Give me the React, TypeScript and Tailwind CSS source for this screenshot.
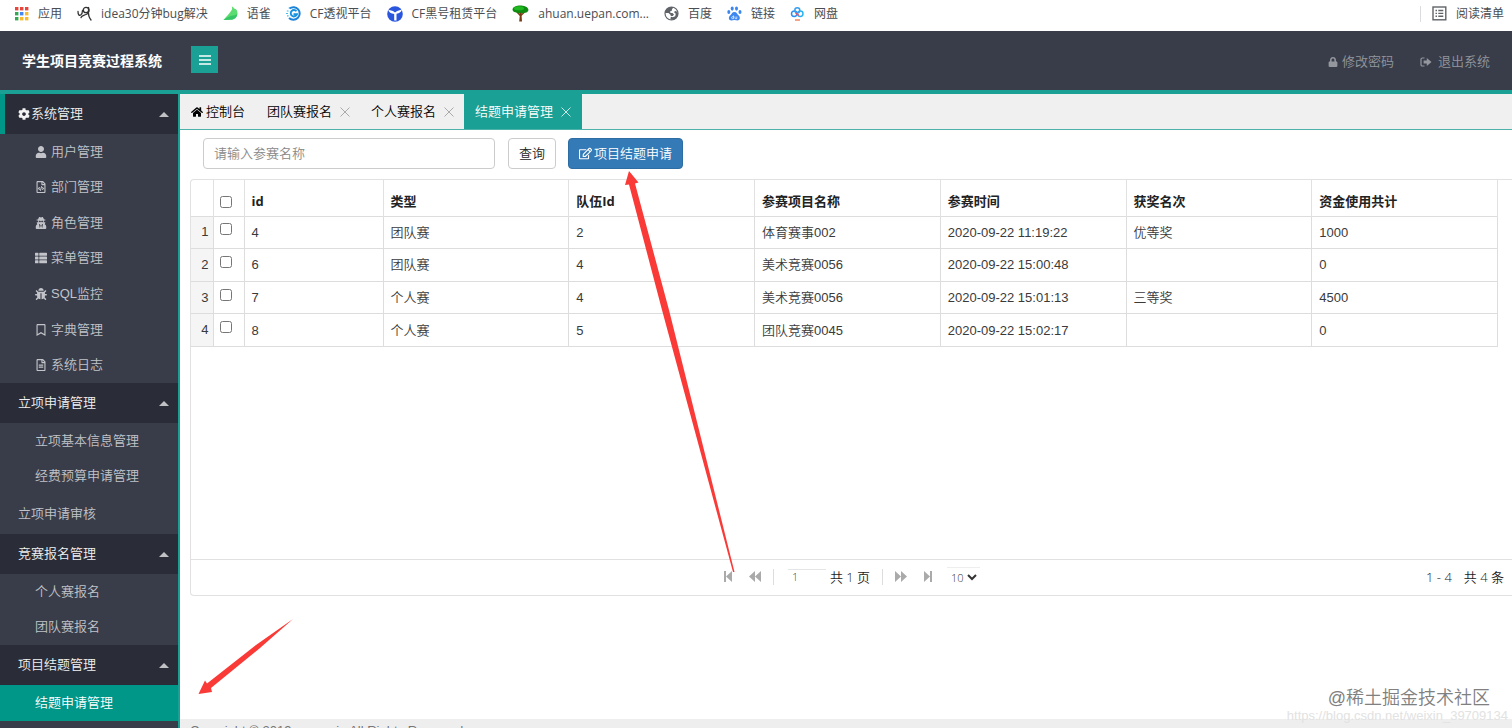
import React, { useState } from 'react';
import {
  FaBug,
  FaCog,
  FaHome,
  FaLock,
  FaRegBookmark,
  FaRegEdit,
  FaRegFileAlt,
  FaRegFileCode,
  FaThList,
  FaUser,
  FaUserSecret,
} from 'react-icons/fa';
import type { IconType } from 'react-icons';

/* ---------- bookmark icons ---------- */

const AppsIcon = () => {
  const colors = ['#e8453c', '#e8453c', '#e8453c', '#34a853', '#4285f4', '#f9bb2d', '#34a853', '#f9bb2d', '#f9bb2d'];
  return (
    <svg width="15" height="15" viewBox="0 0 15 15">
      {colors.map((c, i) => (
        <rect key={i} x={1 + (i % 3) * 5} y={1 + Math.floor(i / 3) * 5} width="3.4" height="3.4" fill={c} />
      ))}
    </svg>
  );
};

const ScriptIcon = () => (
  <svg width="15" height="15" viewBox="0 0 15 15" fill="none" stroke="#333" strokeWidth="1.3" strokeLinecap="round">
    <path d="M1 5.500c0 3 1.200 4.500 2.700 3.500S5.500 6 5.500 4.500" />
    <circle cx="9" cy="4" r="2.700" />
    <path d="M11.500 1.500c1 3 .2 6-2.500 7S4.500 9.500 4 11.500M11.500 5c-.3 3 .5 6.500 2.500 9" />
  </svg>
);

const LeafIcon = () => (
  <svg width="15" height="15" viewBox="0 0 15 15">
    <path d="M8.500.5c1.500.3 2 .8 2.600 2 2.200.3 3 1.500 3.400 4.200 0 4-3 6.800-7 6.800L.5 14C3 11 7 7 9 3.500 9.300 2 9.200 1.200 8.500.5z" fill="#5bdb70" />
    <path d="M.5 14C4 11.500 7 9.800 10 9.500c2 .1 3.500-.7 4.300-2 0 4-3 6.300-7 6.300z" fill="#35c566" />
  </svg>
);

const GIcon = () => (
  <svg width="15" height="15" viewBox="0 0 15 15" fill="none">
    <path d="M3.500 2.500A6.300 6.300 0 1 1 3 12" stroke="#1a82d8" strokeWidth="2" />
    <path d="M10.500 5.300A3.200 3.200 0 1 0 11 8.200H7.500" stroke="#1593e0" strokeWidth="1.900" />
    <path d="M.8 5h1.800M0 7.500h2M1 9.800h1.600M2.600 2h1.600" stroke="#42bdf0" strokeWidth="1.200" />
  </svg>
);

const RentIcon = () => (
  <svg width="16" height="16" viewBox="0 0 16 16">
    <circle cx="8" cy="8" r="7.800" fill="#2a55df" />
    <path d="M1.300 3.800 6 5l2 1.500L10.200 5l4.600-1.500c-.5 2.500-2 3.700-5.300 4.300v6.700H7.200V8C4 7.500 1.800 6.500 1.300 3.800z" fill="#fff" />
  </svg>
);

const TreeIcon = () => (
  <svg width="17" height="17" viewBox="0 0 17 17">
    <path d="M7 7h3l-.4 3.500.4 6H7.200l.6-6z" fill="#7a3b10" />
    <path d="M4.500 6.500 8.200 10.500M13 6.500l-4 4" stroke="#7a3b10" strokeWidth="1.200" />
    <path d="M.5 4.500C1 1.500 4.500.5 8 .5s8 1 8.500 4.500c-.5 2-2.500 3.500-4.500 2.500-1 1.200-2 .5-3 0-1.500 1-3.500 1-4.500 0C2.500 7.500.5 6.500.5 4.500z" fill="#0e8c12" />
    <ellipse cx="7" cy="3.200" rx="5" ry="2" fill="#21b81f" />
  </svg>
);

const GlobeIcon = () => (
  <svg width="15" height="15" viewBox="0 0 15 15">
    <circle cx="7.500" cy="7.500" r="6.500" fill="#fff" stroke="#5f6368" strokeWidth="1.200" />
    <path d="M9.500 1.200C6 .2 1.500 2.500 1 7h3.500l2 1.700.3 1.300h2L10 8.500 8.500 7H6.500L6 5.500l1.800-.8L8 3.200z" fill="#5f6368" />
    <path d="M14 7.500 12.500 5.200 10.800 5l-.6 1.600 1.600 1.200-.6 2.400-2.400 1-1.600-.4-.8 1.200.4 1.700C11 14.500 14 11.500 14 7.500z" fill="#5f6368" />
  </svg>
);

const PawIcon = () => (
  <svg width="15" height="15" viewBox="0 0 15 15" fill="#3b86f0">
    <ellipse cx="1.800" cy="6" rx="1.500" ry="2" />
    <ellipse cx="5.200" cy="2.600" rx="1.500" ry="2.100" />
    <ellipse cx="9.500" cy="2.600" rx="1.500" ry="2.100" />
    <ellipse cx="13" cy="6" rx="1.500" ry="2" />
    <path d="M7.400 6c2.400 0 2.700 2.200 4.300 3.500 2.200 2 1 5-1.200 5-1.200 0-1.900-.4-3.100-.4s-1.900.4-3.100.4c-2.400 0-3.400-3-1.200-5C4.700 8.200 5 6 7.400 6z" />
    <path d="M6.500 9.500v3.200H5.600a.8.8 0 0 1 0-2h.8M8 10.500v1.600q0 .6.600.6h1.200v-2.200" fill="none" stroke="#fff" strokeWidth=".7" />
  </svg>
);

const DiskIcon = () => (
  <svg width="15" height="15" viewBox="0 0 15 15" fill="none" strokeWidth="1.500">
    <circle cx="4.200" cy="7.800" r="2.700" stroke="#2b8ef5" />
    <circle cx="10.300" cy="7.800" r="2.700" stroke="#29b3f0" />
    <circle cx="7.300" cy="4.300" r="2.500" stroke="#3aa0f0" />
    <path d="M5.500 7 9 9.500" stroke="#f0556a" />
    <path d="M5 14h5" stroke="#f0663a" strokeWidth="1.200" />
  </svg>
);

const ReadingListIcon = () => (
  <svg width="15" height="15" viewBox="0 0 15 15" fill="none" stroke="#5f6368" strokeWidth="1.400">
    <rect x="1" y="1" width="12.800" height="12.800" />
    <path d="M3.500 4.500H5M3.500 7.400H5M3.500 10.300H5M6.300 4.500h5M6.300 7.400h5M6.300 10.300h5" />
  </svg>
);

const SignOutIcon = () => (
  <svg width="12" height="10" viewBox="0 0 12 10">
    <path d="M4.500 1H2.300Q1 1 1 2.300v5.400Q1 9 2.300 9h2.200" fill="none" stroke="currentColor" strokeWidth="1.200" />
    <path d="M3.600 3.500h3.200V1L11.500 5 6.800 9V6.500H3.600z" fill="currentColor" />
  </svg>
);

const BarsIcon = () => (
  <svg width="12" height="10" viewBox="0 0 12 10" stroke="#fff" strokeWidth="1.300">
    <path d="M0 1h12M0 5h12M0 9h12" />
  </svg>
);

const CloseIcon = () => (
  <svg width="10" height="10" viewBox="0 0 10 10" stroke="currentColor" strokeWidth="1">
    <path d="M.5.5l9 9M9.500.5l-9 9" />
  </svg>
);

/* ---------- data ---------- */

const bookmarks = [
  { label: '应用', Icon: AppsIcon },
  { label: 'idea30分钟bug解决', Icon: ScriptIcon },
  { label: '语雀', Icon: LeafIcon },
  { label: 'CF透视平台', Icon: GIcon },
  { label: 'CF黑号租赁平台', Icon: RentIcon },
  { label: 'ahuan.uepan.com...', Icon: TreeIcon },
  { label: '百度', Icon: GlobeIcon },
  { label: '链接', Icon: PawIcon },
  { label: '网盘', Icon: DiskIcon },
];

type Child = { label: string; Icon?: IconType };

const systemItems: Child[] = [
  { label: '用户管理', Icon: FaUser },
  { label: '部门管理', Icon: FaRegFileCode },
  { label: '角色管理', Icon: FaUserSecret },
  { label: '菜单管理', Icon: FaThList },
  { label: 'SQL监控', Icon: FaBug },
  { label: '字典管理', Icon: FaRegBookmark },
  { label: '系统日志', Icon: FaRegFileAlt },
];

const rows = [
  ['4', '团队赛', '2', '体育赛事002', '2020-09-22 11:19:22', '优等奖', '1000'],
  ['6', '团队赛', '4', '美术竞赛0056', '2020-09-22 15:00:48', '', '0'],
  ['7', '个人赛', '4', '美术竞赛0056', '2020-09-22 15:01:13', '三等奖', '4500'],
  ['8', '个人赛', '5', '团队竞赛0045', '2020-09-22 15:02:17', '', '0'],
];

const columns = ['id', '类型', '队伍Id', '参赛项目名称', '参赛时间', '获奖名次', '资金使用共计'];

/* ---------- layout pieces ---------- */

const BookmarkBar = () => (
  <div className="flex h-[31px] shrink-0 items-center justify-between overflow-hidden bg-white pb-1 pl-[14px] pr-2 font-['Open_Sans','Noto_Sans_CJK_SC',sans-serif] text-xs font-normal text-[#4a4d51]">
    <div className="flex items-center gap-[15px] whitespace-nowrap">
      {bookmarks.map(({ label, Icon }) => (
        <a key={label} href="#" className="flex items-center gap-[9px]">
          <Icon />
          {label}
        </a>
      ))}
    </div>
    <a href="#" className="flex items-center gap-[9px] whitespace-nowrap border-l border-[#dadce0] pl-[11px]">
      <ReadingListIcon />
      阅读清单
    </a>
  </div>
);

const Header = () => (
  <header className="flex h-[63px] shrink-0 items-center justify-between border-b-4 border-[#1aa094] bg-[#393d49] pl-[22px] pr-[22px]">
    <div className="flex items-center gap-[29px]">
      <h1 className="text-sm font-bold text-white">学生项目竞赛过程系统</h1>
      <button type="button" aria-label="菜单" className="mb-[2px] flex size-[27px] items-center justify-center bg-[#1aa094]">
        <BarsIcon />
      </button>
    </div>
    <div className="flex gap-[26px] pt-[2px] text-[#94979e]">
      <a href="#" className="flex items-center gap-1">
        <FaLock size={10} />
        修改密码
      </a>
      <a href="#" className="flex items-center gap-[6px]">
        <SignOutIcon />
        退出系统
      </a>
    </div>
  </header>
);

const GroupButton = ({ label, first }: { label: string; first?: boolean }) => (
  <button
    type="button"
    className={`flex h-10 w-full items-center justify-between bg-[#2a2d37] pr-[9px] text-[#f2f2f3] ${
      first ? 'border-l-[5px] border-[#009688] pl-[13px]' : 'pl-[18px]'
    }`}
  >
    <span className="flex items-center gap-px">
      {first && <FaCog size={12} />}
      {label}
    </span>
    <svg width="10" height="5" viewBox="0 0 10 5" fill="#c0c1c4">
      <path d="M0 5 5 0l5 5z" />
    </svg>
  </button>
);

const Children = ({ items, className }: { items: Child[]; className: string }) => (
  <ul className={`grid auto-rows-fr ${className}`}>
    {items.map(({ label, Icon }) => (
      <li key={label} className="flex">
        <a href="#" className="flex flex-1 items-center gap-1 pl-[35px]">
          {Icon && <Icon size={12} />}
          {label}
        </a>
      </li>
    ))}
  </ul>
);

const Sidebar = () => (
  <nav className="w-[180px] shrink-0 overflow-hidden border-r-2 border-[#1aa094] bg-[#393d49] text-[#c2c4c9]">
    <GroupButton label="系统管理" first />
    <Children items={systemItems} className="h-[249px]" />
    <GroupButton label="立项申请管理" />
    <Children items={[{ label: '立项基本信息管理' }, { label: '经费预算申请管理' }]} className="h-[71px]" />
    <a href="#" className="flex h-10 items-center pl-[18px]">
      立项申请审核
    </a>
    <GroupButton label="竞赛报名管理" />
    <Children items={[{ label: '个人赛报名' }, { label: '团队赛报名' }]} className="h-[71px]" />
    <GroupButton label="项目结题管理" />
    <a href="#" className="flex h-9 items-center bg-[#009688] pl-[35px] text-white">
      结题申请管理
    </a>
  </nav>
);

const Tabs = () => (
  <div className="flex h-[36px] shrink-0 border-b border-[#4db3aa] bg-[#f0f0f0] text-black">
    <button type="button" className="flex items-center gap-[3px] px-[11px]">
      <FaHome size={12} />
      控制台
    </button>
    {['团队赛报名', '个人赛报名'].map(t => (
      <button key={t} type="button" className="flex items-center gap-2 pl-[11px] pr-[10px]">
        {t}
        <span className="text-[#aaa]">
          <CloseIcon />
        </span>
      </button>
    ))}
    <button type="button" className="flex items-center gap-2 bg-[#1aa094] px-[11px] text-white">
      结题申请管理
      <span className="text-[#c9e8e5]">
        <CloseIcon />
      </span>
    </button>
  </div>
);

const DataTable = () => {
  const [checked, setChecked] = useState<number[]>([]);
  const toggle = (i: number) => setChecked(c => (c.includes(i) ? c.filter(n => n !== i) : [...c, i]));
  const all = checked.length === rows.length;

  return (
    <div className="pr-[14px]">
      <table className="h-[167px] w-full table-fixed border-collapse text-left">
        <colgroup>
          <col className="w-[22px]" />
          <col className="w-[31px]" />
          <col className="w-[139px]" />
        </colgroup>
        <thead>
          <tr className="h-[36px] border-b border-[#ddd]">
            <th className="border-r border-[#e1e1e1]" />
            <th className="border-r border-[#e1e1e1] pt-2 align-middle">
              <input
                type="checkbox"
                aria-label="全选"
                checked={all}
                onChange={() => setChecked(all ? [] : rows.map((_, i) => i))}
                className="ml-[6px] block size-3"
              />
            </th>
            {columns.map(c => (
              <th
                key={c}
                className="border-r border-[#e1e1e1] pl-[7px] pt-[6px] font-['Open_Sans','Noto_Sans_CJK_SC',sans-serif] font-bold text-[#222]"
              >
                {c}
              </th>
            ))}
          </tr>
        </thead>
        <tbody>
          {rows.map((row, i) => (
            <tr key={i} className="h-8 border-b border-[#ddd]">
              <td className="border-r border-[#ddd] bg-[#f5f5f5] pr-1 text-right">{i + 1}</td>
              <td className="border-r border-[#ddd] pb-[6px]">
                <input
                  type="checkbox"
                  aria-label={`选择第${i + 1}行`}
                  checked={checked.includes(i)}
                  onChange={() => toggle(i)}
                  className="ml-[6px] block size-3"
                />
              </td>
              {row.map((cell, j) => (
                <td key={j} className="truncate border-r border-[#ddd] pl-[7px] pt-px">
                  {cell}
                </td>
              ))}
            </tr>
          ))}
        </tbody>
      </table>
    </div>
  );
};

const Pager = () => (
  <div className="grid h-[36px] grid-cols-[1fr_auto_1fr] items-center border-t border-[#e1e1e1] pb-[2px] font-['Open_Sans','Noto_Sans_CJK_SC',sans-serif]">
    <span />
    <div className="flex items-center text-[#aaa]">
      <button type="button" aria-label="首页" className="mr-4">
        <svg width="10" height="11" viewBox="0 0 10 11" fill="currentColor">
          <path d="M1 0h2v11H1zM9 0v11L3 5.500z" />
        </svg>
      </button>
      <button type="button" aria-label="上一页" className="mr-3">
        <svg width="12" height="11" viewBox="0 0 12 11" fill="currentColor">
          <path d="M6 0v11L0 5.500zM12 0v11L6 5.500z" />
        </svg>
      </button>
      <span className="h-4 w-px bg-[#ddd]" />
      <input
        aria-label="页码"
        defaultValue="1"
        className="ml-[14px] h-4 w-[38px] border-t border-[#e5e5e5] pl-1 text-[11px] text-[#444] outline-none"
      />
      <span className="ml-1 text-[#222]">共 1 页</span>
      <span className="ml-3 h-4 w-px bg-[#ddd]" />
      <button type="button" aria-label="下一页" className="ml-3">
        <svg width="12" height="11" viewBox="0 0 12 11" fill="currentColor">
          <path d="M0 0v11l6-5.500zM6 0v11l6-5.500z" />
        </svg>
      </button>
      <button type="button" aria-label="末页" className="ml-4">
        <svg width="10" height="11" viewBox="0 0 10 11" fill="currentColor">
          <path d="M7 0h2v11H7zM1 0v11l6-5.500z" />
        </svg>
      </button>
      <select aria-label="每页条数" defaultValue="10" className="ml-[14px] h-5 border-t border-[#eee] text-[11px] text-[#333]">
        <option>10</option>
        <option>30</option>
        <option>50</option>
      </select>
    </div>
    <div className="flex justify-end gap-3 pr-2 text-[#222]">
      <span>1 - 4</span>
      <span>共 4 条</span>
    </div>
  </div>
);

const Content = () => (
  <main className="relative flex min-w-0 flex-1 flex-col bg-white">
    <Tabs />
    <form className="flex items-center pb-[10px] pl-[23px] pt-2" onSubmit={e => e.preventDefault()}>
      <input
        type="text"
        aria-label="参赛名称"
        placeholder="请输入参赛名称"
        className="h-[31px] w-[292px] rounded border border-[#ccc] px-[10px] placeholder:text-[#888]"
      />
      <button type="submit" className="ml-[13px] h-[31px] rounded border border-[#ccc] px-[10px] text-[#222]">
        查询
      </button>
      <button
        type="button"
        className="ml-3 flex h-[31px] items-center gap-[2px] rounded border border-[#2e6da4] bg-[#337ab7] px-[10px] text-white"
      >
        <FaRegEdit size={13} />
        项目结题申请
      </button>
    </form>
    <section className="ml-[10px] flex h-[417px] flex-col justify-between rounded-l border-y border-l border-[#e1e1e1] text-[#3a3a3a]">
      <DataTable />
      <Pager />
    </section>
    <footer className="-mb-[11px] mt-auto bg-[#eee] pl-[10px] pt-1 leading-4 text-[#777]">
      Copyright © 2019 renren.io All Rights Reserved.
    </footer>
    <div className="pointer-events-none absolute bottom-0 right-1 text-right">
      <p className="pr-[18px] text-lg leading-5 text-[#808080]">@稀土掘金技术社区</p>
      <p className="pb-1 text-[13px] leading-4 text-[#e2e2e2]">https://blog.csdn.net/weixin_39709134</p>
    </div>
  </main>
);

/* hand-drawn pointers lying over the page */
const Arrows = () => (
  <svg className="pointer-events-none absolute left-0 top-0" width="760" height="728" viewBox="0 0 760 728" fill="#f93a37">
    <path d="M629 171l9.500 11.500-3.500 1L669 310 734.500 572 733 572 662 310 629 184.500l-4 .5z" />
    <path d="M198.500 694l6.500-13.500 2 3L256 645 293 619 260 648 211 688l1 4z" />
  </svg>
);

export default function App() {
  return (
    <div className="relative flex h-screen flex-col overflow-hidden font-['Liberation_Sans','Noto_Sans_CJK_SC',sans-serif] text-[13px] font-[350] leading-5">
      <BookmarkBar />
      <Header />
      <div className="flex min-h-0 flex-1">
        <Sidebar />
        <Content />
      </div>
      <Arrows />
    </div>
  );
}
